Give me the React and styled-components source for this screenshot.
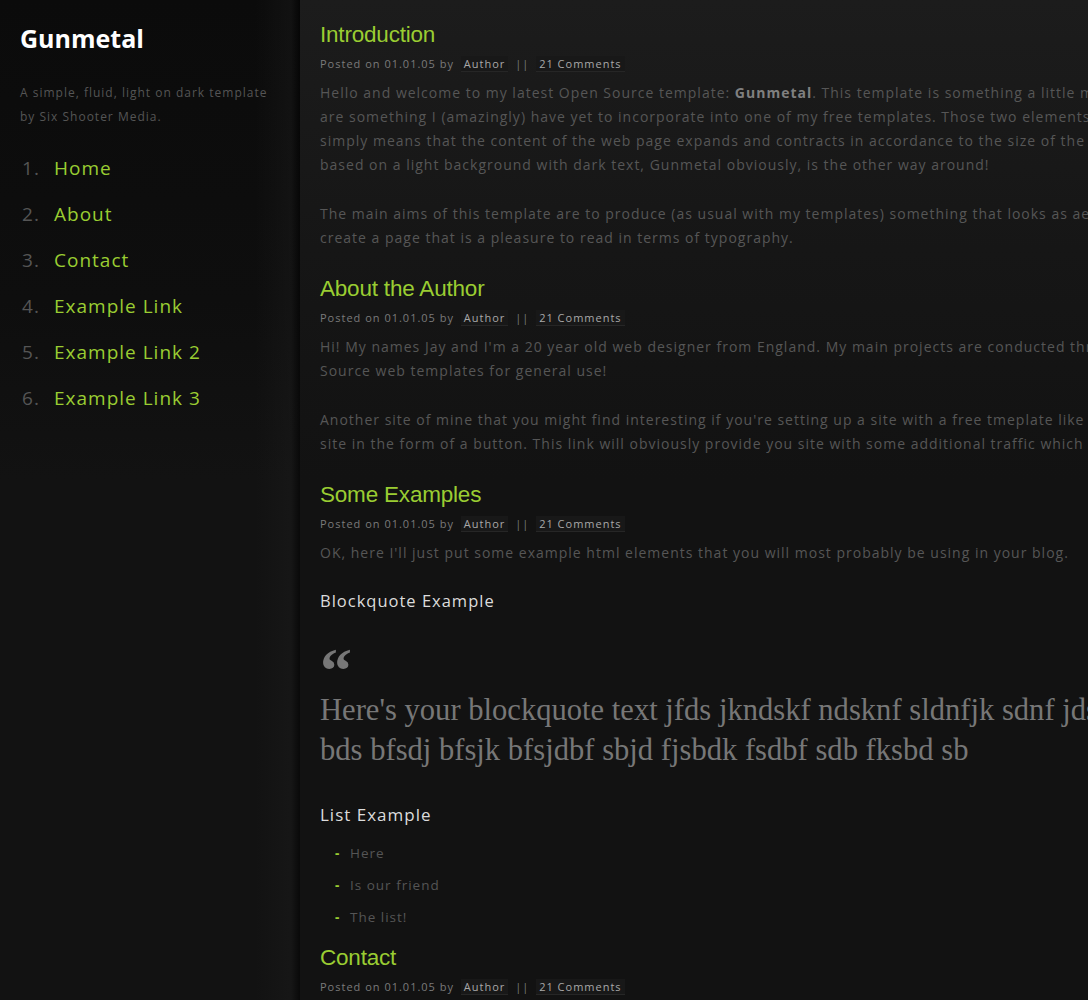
import React from 'react'
import styled, { createGlobalStyle } from 'styled-components'

const sans = '"Open Sans", "DejaVu Sans", sans-serif'

const GlobalStyle = createGlobalStyle`
  html, body {
    margin: 0;
    padding: 0;
    background: #121212;
  }

  body {
    font-family: ${ sans };
    letter-spacing: 1px;
    overflow: hidden;
  }
`

const Page = styled.div`
  display: flex;
  min-height: 1000px;
  width: 1088px;
  overflow: hidden;
`

const Sidebar = styled.aside`
  flex: 0 0 300px;
  box-sizing: border-box;
  padding: 22px 20px;
  background:
    linear-gradient(to right, rgba(0, 0, 0, 0) 85%, rgba(30, 30, 30, 0.35) 97%, rgba(0, 0, 0, 0.5) 100%),
    linear-gradient(to bottom, #0b0b0b 0, #0e0e0e 300px, #121212 480px);
`

const SiteTitle = styled.h1`
  margin: 0;
  font-size: 25px;
  line-height: 32px;
  font-weight: bold;
  color: #fff;
  letter-spacing: 0;
`

const Tagline = styled.p`
  margin: 27px 0 0;
  font-size: 12px;
  line-height: 24px;
  color: #555;
`

const Nav = styled.ol`
  list-style: none;
  margin: 16px 0 0;
  padding: 0;
`

const NavItem = styled.li`
  display: flex;
  align-items: center;
  height: 46px;
  font-size: 19px;
`

const NavNum = styled.span`
  width: 34px;
  padding-left: 2px;
  box-sizing: border-box;
  color: #555;
`

const NavLink = styled.a`
  color: #9acd32;
  text-decoration: none;
`

const Main = styled.main`
  flex: 1;
  min-width: 0;
  overflow: hidden;
  padding: 21px 0 0 20px;
  background: linear-gradient(to bottom, #1c1c1c 0, #161616 250px, #121212 480px);
`

const Post = styled.section`
  margin-bottom: ${ props => props.$after }px;
`

const Title = styled.h2`
  margin: 0;
  font-family: "Liberation Sans", Arial, sans-serif;
  font-weight: normal;
  font-size: 22.5px;
  line-height: 28px;
  color: #9acd32;
  letter-spacing: -0.2px;
`

const Meta = styled.div`
  margin-top: 7px;
  font-size: 11px;
  line-height: 16px;
  color: #7a7a7a;
  white-space: nowrap;
`

const Tag = styled.a`
  display: inline-block;
  margin: 0 3px;
  padding: 0 3px;
  line-height: 15px;
  background: #181818;
  border-bottom: 1px solid #262626;
  color: #a8a8a8;
  text-decoration: none;
`

const Text = styled.p`
  margin: ${ props => props.$top || 0 }px 0 0;
  font-size: 14px;
  line-height: 24px;
  color: #565656;

  b {
    color: #808080;
  }
`

const Line = styled.span`
  display: block;
  white-space: nowrap;
`

const SubHead = styled.h3`
  margin: ${ props => props.$top }px 0 0;
  font-size: ${ props => props.$size }px;
  line-height: 24px;
  font-weight: normal;
  color: #dcdcdc;
`

const Quote = styled.blockquote`
  margin: 38px 0 0;
  padding: 0;
  font-family: "Liberation Serif", "Times New Roman", serif;
  letter-spacing: 0;
  color: #777;
`

const QuoteMark = styled.div`
  height: 39px;
  font-size: 64px;
  line-height: 40px;
  font-weight: bold;
`

const QuoteText = styled.div`
  font-size: 30.6px;
  line-height: 40px;
`

const List = styled.ul`
  list-style: none;
  margin: 10px 0 0;
  padding: 0 0 0 15px;
`

const ListItem = styled.li`
  font-size: 13.5px;
  line-height: 32px;
  color: #555;

  &::before {
    content: '-';
    display: inline-block;
    width: 15px;
    color: #9acd32;
    font-weight: bold;
  }
`

const PostMeta = () => (
  <Meta>
    Posted on 01.01.05 by <Tag href="#">Author</Tag> || <Tag href="#">21 Comments</Tag>
  </Meta>
)

const nav = ['Home', 'About', 'Contact', 'Example Link', 'Example Link 2', 'Example Link 3']

export default function App() {
  return (
    <>
      <GlobalStyle />
      <Page>
        <Sidebar>
          <SiteTitle>Gunmetal</SiteTitle>
          <Tagline>
            A simple, fluid, light on dark template<br />
            by Six Shooter Media.
          </Tagline>
          <Nav>
            {nav.map((item, i) => (
              <NavItem key={item}>
                <NavNum>{i + 1}.</NavNum>
                <NavLink href="#">{item}</NavLink>
              </NavItem>
            ))}
          </Nav>
        </Sidebar>

        <Main>
          <Post $after={25}>
            <Title>Introduction</Title>
            <PostMeta />
            <Text $top={9}>
              <Line>Hello and welcome to my latest Open Source template: <b>Gunmetal</b>. This template is something a little more special than my usual designs, as it is fluid and light on dark. These</Line>
              <Line>are something I (amazingly) have yet to incorporate into one of my free templates. Those two elements are explained below. A fluid design</Line>
              <Line>simply means that the content of the web page expands and contracts in accordance to the size of the browser window. Most designs are</Line>
              <Line>based on a light background with dark text, Gunmetal obviously, is the other way around!</Line>
            </Text>
            <Text $top={25}>
              <Line>The main aims of this template are to produce (as usual with my templates) something that looks as aesthetically pleasing as possible, and to</Line>
              <Line>create a page that is a pleasure to read in terms of typography.</Line>
            </Text>
          </Post>

          <Post $after={25}>
            <Title>About the Author</Title>
            <PostMeta />
            <Text $top={9}>
              <Line>Hi! My names Jay and I'm a 20 year old web designer from England. My main projects are conducted through my website, where I offer free Open</Line>
              <Line>Source web templates for general use!</Line>
            </Text>
            <Text $top={25}>
              <Line>Another site of mine that you might find interesting if you're setting up a site with a free tmeplate like this one, is where you can list your</Line>
              <Line>site in the form of a button. This link will obviously provide you site with some additional traffic which is always welcome.</Line>
            </Text>
          </Post>

          <Post $after={11}>
            <Title>Some Examples</Title>
            <PostMeta />
            <Text $top={9}>
              <Line>OK, here I'll just put some example html elements that you will most probably be using in your blog.</Line>
            </Text>

            <SubHead $top={24} $size={16.5}>Blockquote Example</SubHead>
            <Quote>
              <QuoteMark>&ldquo;</QuoteMark>
              <QuoteText>
                <Line>Here's your blockquote text jfds jkndskf ndsknf sldnfjk sdnf jdsf jsdnfk sdjf</Line>
                <Line>bds bfsdj bfsjk bfsjdbf sbjd fjsbdk fsdbf sdb fksbd sb</Line>
              </QuoteText>
            </Quote>

            <SubHead $top={33} $size={17}>List Example</SubHead>
            <List>
              <ListItem>Here</ListItem>
              <ListItem>Is our friend</ListItem>
              <ListItem>The list!</ListItem>
            </List>
          </Post>

          <Post $after={25}>
            <Title>Contact</Title>
            <PostMeta />
          </Post>
        </Main>
      </Page>
    </>
  )
}
